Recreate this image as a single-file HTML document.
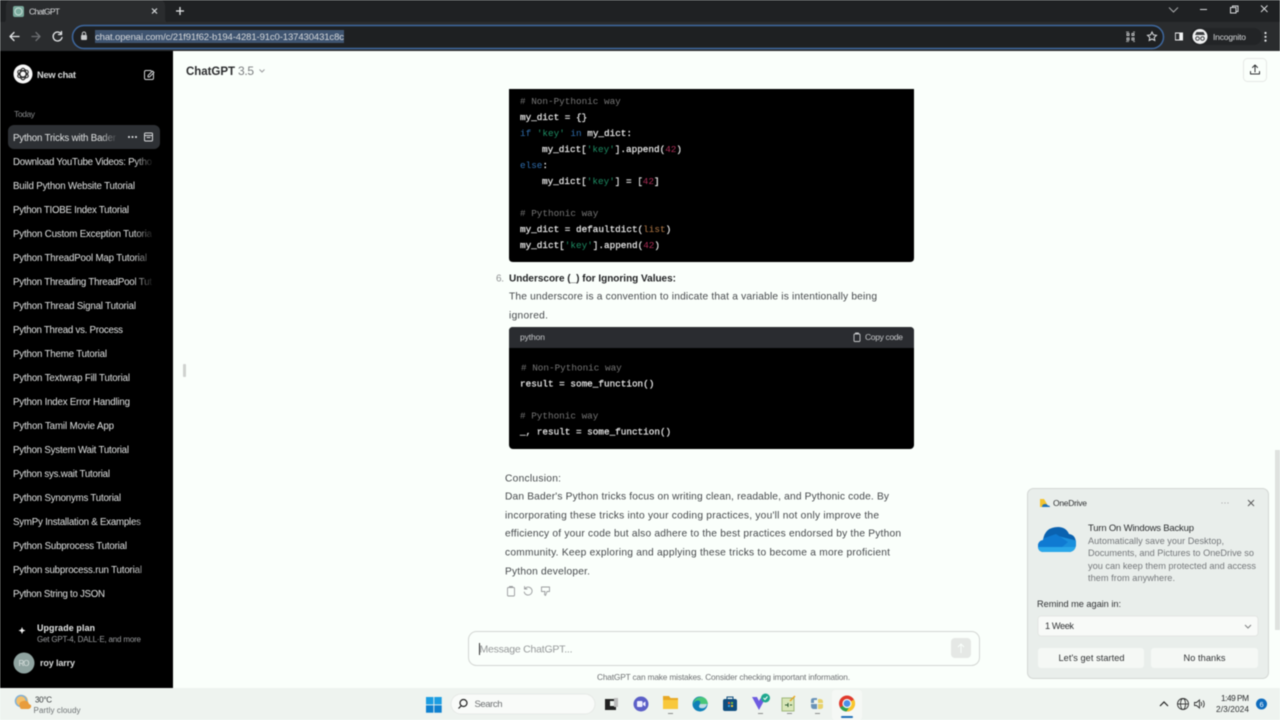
<!DOCTYPE html>
<html><head><meta charset="utf-8"><style>
html,body{margin:0;padding:0;width:1280px;height:720px;overflow:hidden;background:#fafffb}
svg{display:block;filter:blur(.4px)}
text{font-family:"Liberation Sans",sans-serif;white-space:pre}
.s text{font-size:9.700px;fill:#e2e4e4}
.b text{font-size:10.200px;fill:#45484b}
.c text{font-family:"Liberation Mono",monospace;font-size:9.330px;fill:#e6e6e6;stroke:#e6e6e6;stroke-width:.25}
.c text.g{fill:#767676;stroke:none}
.k{fill:#2f6cab;stroke:none}.t{fill:#1d8a62;stroke:none}.n{fill:#a92c55;stroke:none}.l{fill:#b57a45;stroke:none}
.i{fill:none;stroke:currentColor;stroke-linecap:round;stroke-linejoin:round}
</style></head><body>
<svg width="1280" height="720" viewBox="0 0 1280 720" xmlns="http://www.w3.org/2000/svg">
<!-- chrome -->
<rect width="1280" height="23" fill="#1f2123"/>
<rect y="22" width="1280" height="29" fill="#2a2c2e"/>
<path d="M1 23c4 0 5-2 5-5V6q0-6 6-6h148q5 0 5 6v12c0 3 1 5 5 5z" fill="#2a2c2e"/>
<rect x="13" y="6" width="11" height="11" rx="2" fill="#79a99c"/>
<circle cx="18.500" cy="11.500" r="3.500" fill="none" stroke="#c5dbd4"/>
<text x="29" y="14.500" font-size="8.500" fill="#d8dadc" textLength="31">ChatGPT</text>
<path d="M152 8.500l5 5m0-5l-5 5" stroke="#d8dadc" stroke-width="1.200"/>
<path d="M176 11h8m-4-4v8" stroke="#e4e6e8" stroke-width="1.300"/>
<g class="i" style="color:#e4e6e8" stroke-width="1.300">
<path d="M19 36.500h-9m4-4l-4 4 4 4"/>
<path d="M32 36.500h8m-4-4l4 4-4 4" style="color:#6e7073" stroke="#6e7073"/>
<path d="M61 33.500a4.500 4.500 0 1 0 1 4M61.500 31.500v3h-3"/>
</g>
<rect x="72.500" y="25.500" width="1091" height="23" rx="11.500" fill="#1e2022" stroke="#3e689f" stroke-width="1.500"/>
<rect x="81" y="35" width="6" height="5" rx="1" fill="#c8cacc"/>
<path d="M82.300 35v-1.300a1.700 1.700 0 0 1 3.400 0V35" fill="none" stroke="#c8cacc"/>
<rect x="95" y="30" width="249" height="13" fill="#3f5470"/>
<text x="95" y="40" font-size="9.500" fill="#d4d7da" textLength="249">chat.openai.com/c/21f91f62-b194-4281-91c0-137430431c8c</text>
<g fill="none" stroke="#c0c2c4">
<path d="M1127 33.500h2v2h-2zM1132 33.500h2v2h-2zM1127 38h2v2h-2zM1132 38h2v2h-2z" stroke-width="1"/>
<path d="M1126 32h3m4 0h2M1126 41.500h3m4 0h2" stroke-width=".8"/>
<path d="M1152 32l1.400 2.900 3.100.4-2.300 2.100.6 3.100-2.800-1.500-2.800 1.500.6-3.100-2.300-2.100 3.100-.4z" stroke="#dcdee0" stroke-width="1"/>
</g>
<rect x="1175" y="32.500" width="8" height="8" fill="#f2f3f4"/><rect x="1175.800" y="33.500" width="3.500" height="6" fill="#2a2c2e"/>
<rect x="1190" y="28" width="72" height="17" rx="8.500" fill="#222426"/>
<circle cx="1200" cy="36.500" r="7.500" fill="#f1f2f3"/>
<path d="M1195 35h10l-1.500-3h-7z" fill="#3a3c3f"/>
<circle cx="1197.500" cy="38.500" r="1.800" fill="none" stroke="#3a3c3f"/><circle cx="1202.500" cy="38.500" r="1.800" fill="none" stroke="#3a3c3f"/>
<text x="1213" y="40" font-size="8.500" fill="#d4d6d8" textLength="33">Incognito</text>
<g fill="#e4e6e8"><circle cx="1265.500" cy="33" r="1.100"/><circle cx="1265.500" cy="36.800" r="1.100"/><circle cx="1265.500" cy="40.600" r="1.100"/></g>
<g fill="none" stroke="#d6d8da" stroke-width="1">
<path d="M1169 7.500l4.500 4.500 4.500-4.500" stroke="#a8aaac"/>
<path d="M1200 9.500h7"/>
<path d="M1230.500 7.500h5.500v5.500h-5.500z"/><path d="M1232.500 7.500v-1.500h5.500v5.500h-2"/>
<path d="M1261 5.500l6.500 6.500m0-6.500l-6.500 6.500"/>
</g>
<!-- main -->
<rect x="0" y="51" width="1280" height="637" fill="#fafffb"/>
<rect x="0" y="51" width="173" height="637" fill="#000"/>
<!-- sidebar -->
<circle cx="23" cy="74" r="9.500" fill="#f8f8f8"/>
<g fill="none" stroke="#222" stroke-width="1">
<ellipse cx="23" cy="74" rx="5.800" ry="3" transform="rotate(30 23 74)"/>
<ellipse cx="23" cy="74" rx="5.800" ry="3" transform="rotate(90 23 74)"/>
<ellipse cx="23" cy="74" rx="5.800" ry="3" transform="rotate(150 23 74)"/>
</g>
<text x="37" y="78" font-size="9.300" font-weight="bold" fill="#d8dada" textLength="39">New chat</text>
<g class="i" style="color:#d2d4d6" stroke-width="1">
<path d="M151 71v-.5h-5q-1.500 0-1.500 1.500v6q0 1.500 1.500 1.500h6q1.500 0 1.500-1.500v-4" />
<path d="M148 75.500v1.500h1.500l4.500-4.500-1.500-1.500z"/>
</g>
<text x="14" y="117" font-size="8.500" fill="#858789" textLength="21">Today</text>
<rect x="8" y="125" width="152" height="24" rx="6" fill="#2d3034"/>
<g class="s">
<text x="13" y="141" textLength="103">Python Tricks with Bader</text>
<text x="13" y="165" textLength="139">Download YouTube Videos: Pytho</text>
<text x="13" y="189" textLength="122">Build Python Website Tutorial</text>
<text x="13" y="213" textLength="116">Python TIOBE Index Tutorial</text>
<text x="13" y="237" textLength="139">Python Custom Exception Tutoria</text>
<text x="13" y="261" textLength="134">Python ThreadPool Map Tutorial</text>
<text x="13" y="285" textLength="139">Python Threading ThreadPool Tut</text>
<text x="13" y="309" textLength="123">Python Thread Signal Tutorial</text>
<text x="13" y="333" textLength="110">Python Thread vs. Process</text>
<text x="13" y="357" textLength="94">Python Theme Tutorial</text>
<text x="13" y="381" textLength="117">Python Textwrap Fill Tutorial</text>
<text x="13" y="405" textLength="117">Python Index Error Handling</text>
<text x="13" y="429" textLength="101">Python Tamil Movie App</text>
<text x="13" y="453" textLength="116">Python System Wait Tutorial</text>
<text x="13" y="477" textLength="97">Python sys.wait Tutorial</text>
<text x="13" y="501" textLength="108">Python Synonyms Tutorial</text>
<text x="13" y="525" textLength="128">SymPy Installation &amp; Examples</text>
<text x="13" y="549" textLength="114">Python Subprocess Tutorial</text>
<text x="13" y="573" textLength="129">Python subprocess.run Tutorial</text>
<text x="13" y="597" textLength="92">Python String to JSON</text>
</g>
<defs>
<linearGradient id="f"><stop offset="0" stop-color="#000" stop-opacity="0"/><stop offset="1" stop-color="#000"/></linearGradient>
<linearGradient id="f2"><stop offset="0" stop-color="#2d3034" stop-opacity="0"/><stop offset="1" stop-color="#2d3034"/></linearGradient>
<clipPath id="cl"><path d="M1044 552q-6 0-6-6 0-5 5-6 2-13 15-13 8 0 11 7 7 1 7 9.500 0 8.500-8 8.500z"/></clipPath>
</defs>
<rect x="100" y="130" width="18" height="14" fill="url(#f2)"/>
<rect x="134" y="152" width="20" height="450" fill="url(#f)"/>
<g fill="#e6e8ea"><circle cx="129" cy="137" r="1"/><circle cx="132.500" cy="137" r="1"/><circle cx="136" cy="137" r="1"/></g>
<g class="i" style="color:#d8dadc" stroke-width="1"><rect x="144.500" y="133" width="8" height="8" rx="1"/><path d="M144.500 135.500h8M147 137.500h3"/></g>
<path d="M22 627l1 2.500 2.500 1-2.500 1-1 2.500-1-2.500-2.500-1 2.500-1z" fill="#f0f0f0"/>
<text x="37" y="631" font-size="8.800" font-weight="bold" fill="#e6e8e8" textLength="58">Upgrade plan</text>
<text x="37" y="642" font-size="8" fill="#9a9c9e" textLength="104">Get GPT-4, DALL·E, and more</text>
<circle cx="24" cy="663" r="10.500" fill="#8fa3a0"/>
<text x="18.500" y="666" font-size="8" fill="#d8e0de" textLength="11">RO</text>
<text x="40" y="666" font-size="9" font-weight="bold" fill="#d8dada" textLength="35">roy larry</text>
<!-- header -->
<text x="186" y="75" font-size="11.500" font-weight="bold" fill="#2a2b2d" textLength="49">ChatGPT</text>
<text x="238" y="75" font-size="12" fill="#7c7e80" textLength="16">3.5</text>
<path d="M259.500 69.500l2.500 2.500 2.500-2.500" fill="none" stroke="#9a9c9e"/>
<rect x="1243.500" y="58.500" width="23" height="23" rx="4" fill="#fafffb" stroke="#e6e9e6"/>
<g class="i" style="color:#303234" stroke-width="1"><path d="M1255 72v-7m-2.500 2.500l2.500-2.500 2.500 2.500M1250.500 71.500v2.500h9v-2.500"/></g>
<rect x="183" y="364" width="3" height="13" rx="1" fill="#cfd2cf"/>
<!-- code 1 -->
<path d="M509 89h405v169q0 4-4 4h-397q-4 0-4-4z" fill="#000"/>
<g class="c">
<text class="g" x="520" y="104"># Non-Pythonic way</text>
<text x="520" y="120">my_dict = {}</text>
<text x="520" y="136"><tspan class="k">if</tspan> <tspan class="t">'key'</tspan> <tspan class="k">in</tspan> my_dict:</text>
<text x="542" y="152">my_dict[<tspan class="t">'key'</tspan>].append(<tspan class="n">42</tspan>)</text>
<text x="520" y="168"><tspan class="k">else</tspan>:</text>
<text x="542" y="184">my_dict[<tspan class="t">'key'</tspan>] = [<tspan class="n">42</tspan>]</text>
<text class="g" x="520" y="216"># Pythonic way</text>
<text x="520" y="232">my_dict = defaultdict(<tspan class="l">list</tspan>)</text>
<text x="520" y="248">my_dict[<tspan class="t">'key'</tspan>].append(<tspan class="n">42</tspan>)</text>
</g>
<!-- list item -->
<text x="496" y="281.500" font-size="10" fill="#8e9092" textLength="8">6.</text>
<text x="509" y="281.500" font-size="10" font-weight="bold" fill="#1f2022" textLength="167">Underscore (_) for Ignoring Values:</text>
<g class="b">
<text x="509" y="299.500" textLength="368">The underscore is a convention to indicate that a variable is intentionally being</text>
<text x="509" y="318.500" textLength="39">ignored.</text>
</g>
<!-- code 2 -->
<rect x="509" y="327" width="405" height="122" rx="4" fill="#000"/>
<path d="M509 348v-17q0-4 4-4h397q4 0 4 4v17z" fill="#2a2c30"/>
<text x="520" y="340" font-size="8.500" fill="#c6c8ca" textLength="25">python</text>
<g class="i" style="color:#c6c8ca" stroke-width=".9"><rect x="854" y="334" width="6" height="7.500" rx="1"/><path d="M855.500 334v-1h3v1"/></g>
<text x="865" y="340" font-size="8.500" fill="#c6c8ca" textLength="38">Copy code</text>
<g class="c">
<text class="g" x="521" y="370.500"># Non-Pythonic way</text>
<text x="520" y="386.500">result = some_function()</text>
<text class="g" x="520" y="418.500"># Pythonic way</text>
<text x="520" y="434.500">_, result = some_function()</text>
</g>
<!-- conclusion -->
<g class="b">
<text x="505" y="481.500" textLength="56">Conclusion:</text>
<text x="505" y="499.500" textLength="384">Dan Bader's Python tricks focus on writing clean, readable, and Pythonic code. By</text>
<text x="505" y="518.500" textLength="374">incorporating these tricks into your coding practices, you'll not only improve the</text>
<text x="505" y="536.500" textLength="396">efficiency of your code but also adhere to the best practices endorsed by the Python</text>
<text x="505" y="555.500" textLength="385">community. Keep exploring and applying these tricks to become a more proficient</text>
<text x="505" y="574.500" textLength="85">Python developer.</text>
</g>
<g class="i" style="color:#9a9c9e" stroke-width=".9">
<rect x="507.500" y="587.500" width="7" height="8.500" rx="1"/><path d="M509.500 587.500v-1h3v1"/>
<path d="M525 588.500a4 4 0 1 1-.8 3.500M524.500 586.500v2.500h2.500"/>
<path d="M541.500 587h8v4.500h-2.500l-1.500 4-1-1 .5-3h-3.500z"/>
</g>
<!-- input -->
<rect x="468.500" y="631.500" width="511" height="34" rx="8" fill="#fafffb" stroke="#d3d6d3"/>
<rect x="479" y="643" width="1" height="12" fill="#333"/>
<text x="479.500" y="652.500" font-size="10.500" fill="#96999a" textLength="93">Message ChatGPT...</text>
<rect x="951" y="638" width="20" height="20" rx="4" fill="#e5e8e5"/>
<path d="M961 653v-9m-3 3l3-3 3 3" fill="none" stroke="#fafffb"/>
<text x="597" y="680" font-size="8.300" fill="#6e7072" textLength="253">ChatGPT can make mistakes. Consider checking important information.</text>
<rect x="1275" y="450" width="5" height="180" fill="#dfe2df"/>
<!-- onedrive -->
<rect x="1027.500" y="488.500" width="241" height="190" rx="6" fill="#e9eeeb" stroke="#d3d7d4"/>
<path d="M1040 499h4l3 5v3h-7z" fill="#f4c430"/><path d="M1042 507q0-3 3-3 2 0 3 1.500 2 0 2 1.500z" fill="#1d6fb8"/>
<text x="1053" y="506" font-size="8.500" fill="#303234" textLength="34">OneDrive</text>
<g fill="#a8aaac"><circle cx="1222" cy="503" r=".6"/><circle cx="1225" cy="503" r=".6"/><circle cx="1228" cy="503" r=".6"/></g>
<path d="M1248 500l6 6m0-6l-6 6" stroke="#555" stroke-width=".9"/>
<g clip-path="url(#cl)">
<rect x="1036" y="525" width="42" height="29" fill="#0a62b0"/>
<path d="M1058 536l20 5v14h-20z" fill="#1a8fdc"/>
<path d="M1036 541l20-7 12 8-14 12h-18z" fill="#0f7ad2"/>
<path d="M1036 547h42v8h-42z" fill="#2aa8ea"/>
</g>
<text x="1088" y="531" font-size="9.500" fill="#2c2e30" textLength="106">Turn On Windows Backup</text>
<g font-size="9.200" fill="#74777a">
<text x="1088" y="544" textLength="136">Automatically save your Desktop,</text>
<text x="1088" y="556" textLength="166">Documents, and Pictures to OneDrive so</text>
<text x="1088" y="569" textLength="168">you can keep them protected and access</text>
<text x="1088" y="581" textLength="87">them from anywhere.</text>
</g>
<text x="1037" y="607" font-size="9.200" fill="#303234" textLength="84">Remind me again in:</text>
<rect x="1038" y="616" width="220" height="20" rx="3" fill="#f8faf8" stroke="#e3e6e3"/>
<text x="1045" y="629" font-size="9.200" fill="#303234" textLength="29">1 Week</text>
<path d="M1245 625l3 3 3-3" fill="none" stroke="#808284"/>
<rect x="1038" y="648" width="106" height="20" rx="3" fill="#f5f8f5"/>
<rect x="1151" y="648" width="107" height="20" rx="3" fill="#f5f8f5"/>
<text x="1058.500" y="661" font-size="9.200" fill="#303234" textLength="66">Let's get started</text>
<text x="1183.500" y="661" font-size="9.200" fill="#303234" textLength="42">No thanks</text>
<!-- taskbar -->
<rect y="688" width="1280" height="32" fill="#eef3ef"/>
<circle cx="22" cy="701" r="6" fill="#f5c06a"/><circle cx="21" cy="701" r="5.500" fill="none" stroke="#7fb0d8" stroke-width="1.500"/>
<path d="M20 707q-2-5 3-6 5-1 6 3 3 1 2 3-1 2-3 2h-6q-2 0-2-2z" fill="#e89c3c"/>
<text x="35" y="702.500" font-size="8" fill="#35383a" textLength="17">30°C</text>
<text x="33.500" y="713" font-size="8" fill="#6c7072" textLength="47">Partly cloudy</text>
<rect x="426" y="697" width="7.400" height="7.400" fill="#1b9de2"/><rect x="434.300" y="697" width="7.400" height="7.400" fill="#1b9de2"/>
<rect x="426" y="705.300" width="7.400" height="7.400" fill="#0f80cf"/><rect x="434.300" y="705.300" width="7.400" height="7.400" fill="#0f80cf"/>
<rect x="451" y="694" width="144" height="20" rx="10" fill="#f9fbf9" stroke="#e6e9e6"/>
<circle cx="463.500" cy="703" r="3.500" fill="none" stroke="#222" stroke-width="1.200"/><path d="M461 706l-2.500 2.500" stroke="#222" stroke-width="1.200"/>
<text x="474.500" y="707" font-size="9.500" fill="#6d7072" textLength="28">Search</text>
<rect x="605" y="699" width="11" height="11" fill="#222"/><rect x="610" y="701" width="6" height="5" fill="#eef3ef"/><rect x="614" y="698" width="4" height="9" fill="#bbb"/>
<circle cx="641" cy="704" r="7.500" fill="#5b5fc7"/><rect x="637" y="701" width="5.500" height="6" rx="1" fill="#eef"/><path d="M643 703l2.500-1.500v5l-2.500-1.500z" fill="#eef"/>
<path d="M663 696h6l1.500 2h7.500v3h-15z" fill="#e8a825"/><rect x="663" y="700" width="15" height="9" fill="#f8c83c"/><rect x="668" y="713" width="5" height="1" fill="#8a8c8c"/>
<circle cx="700" cy="704" r="7.500" fill="#0f7fb8"/><path d="M693 705q1-8 8-8 6 0 7 7h-8q1-3-1.500-3.500-4-.5-5.500 4.500z" fill="#48c67a"/><path d="M700 704h7q-.5 3-3 4-5 1-5-2z" fill="#eef3ef" opacity=".8"/>
<rect x="723" y="699" width="14" height="12" rx="2" fill="#0f4d7e"/><path d="M727 699v-2h6v2" fill="none" stroke="#0f4d7e"/>
<rect x="728" y="702" width="2" height="2" fill="#e8623c"/><rect x="731" y="702" width="2" height="2" fill="#7cbb3c"/><rect x="728" y="705" width="2" height="2" fill="#2ea0e8"/><rect x="731" y="705" width="2" height="2" fill="#f4c430"/>
<path d="M752 697l7 13 6-11q-3-3-5 0l-1 2-2-4z" fill="#6e5ce0"/>
<circle cx="765.500" cy="698" r="4.500" fill="#1fa88e"/><path d="M763.500 698l1.500 1.500 2.500-3" fill="none" stroke="#fff"/>
<rect x="758" y="713" width="5" height="1" fill="#8a8c8c"/>
<rect x="782" y="698" width="12" height="13" fill="#d8e6b8" stroke="#9fb87a"/><path d="M785 705h3m0-2v4m2-2h2" stroke="#2a5a30"/><path d="M790 701l5-5" stroke="#e8a825" stroke-width="1.500"/>
<rect x="787" y="713" width="5" height="1" fill="#8a8c8c"/>
<path d="M811 703v-3q0-2 3-2h3v2h-3v3zM811 704h6v5h-3q-3 0-3-3z" fill="#6a93b8"/><path d="M818 704h5v3q0 2-3 2h-2zM818 699h2q3 0 3 3v1h-5z" fill="#e8d26a"/>
<rect x="815" y="713" width="5" height="1" fill="#8a8c8c"/>
<rect x="832" y="690" width="30" height="30" rx="3" fill="#f5f8f5"/>
<circle cx="847" cy="703.500" r="8" fill="#e0392c"/>
<path d="M847 703.500l7-4a8 8 0 0 1-7.500 12z" fill="#f8c62c"/>
<path d="M840 707.500a8 8 0 0 0 6.500 4l3.500-5.500-3-2.500z" fill="#2fa24c"/>
<circle cx="847" cy="703.500" r="4" fill="#4a8fe8" stroke="#f5f8f5" stroke-width="1.200"/>
<rect x="841" y="716" width="12" height="2" rx="1" fill="#1f6fb8"/>
<path d="M1160 706l4-4 4 4" fill="none" stroke="#222" stroke-width="1.200"/>
<g fill="none" stroke="#333" stroke-width=".9">
<circle cx="1183" cy="704" r="5.500"/><ellipse cx="1183" cy="704" rx="2.500" ry="5.500"/><path d="M1177.500 704h11"/>
<path d="M1194.500 702.500h2l3-2.500v8l-3-2.500h-2zM1201 702q1.500 2 0 4M1203 700.500q2.500 3.500 0 7"/>
</g>
<text x="1221" y="701" font-size="8.300" fill="#2c2e30" textLength="28">1:49 PM</text>
<text x="1216" y="712" font-size="8.300" fill="#2c2e30" textLength="33">2/3/2024</text>
<circle cx="1261.500" cy="704" r="5.500" fill="#0f6cbd"/>
<text x="1259.500" y="707" font-size="7.500" fill="#fff">6</text>
</svg>
</body></html>
